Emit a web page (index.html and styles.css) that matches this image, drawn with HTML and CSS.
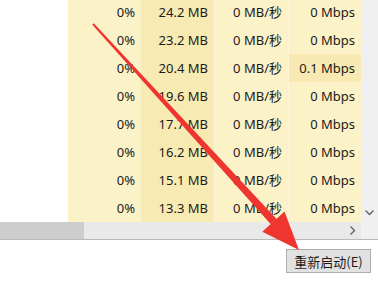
FILE: index.html
```html
<!DOCTYPE html>
<html lang="zh-CN">
  <head>
    <meta charset="UTF-8" />
    <title>任务管理器</title>
    <link rel="stylesheet" href="styles.css">
  </head>
  <body>
    <div class="view">
      <div class="list">
        <div class="rows">
          <div class="row"><div class="name"></div><div class="cell cpu">0%</div><div class="cell mem">24.2 MB</div><div class="cell disk">0 MB/秒</div><div class="cell net">0 Mbps</div></div>
          <div class="row"><div class="name"></div><div class="cell cpu">0%</div><div class="cell mem">23.2 MB</div><div class="cell disk">0 MB/秒</div><div class="cell net">0 Mbps</div></div>
          <div class="row"><div class="name"></div><div class="cell cpu">0%</div><div class="cell mem">20.4 MB</div><div class="cell disk">0 MB/秒</div><div class="cell net hot">0.1 Mbps</div></div>
          <div class="row"><div class="name"></div><div class="cell cpu">0%</div><div class="cell mem">19.6 MB</div><div class="cell disk">0 MB/秒</div><div class="cell net">0 Mbps</div></div>
          <div class="row"><div class="name"></div><div class="cell cpu">0%</div><div class="cell mem">17.7 MB</div><div class="cell disk">0 MB/秒</div><div class="cell net">0 Mbps</div></div>
          <div class="row"><div class="name"></div><div class="cell cpu">0%</div><div class="cell mem">16.2 MB</div><div class="cell disk">0 MB/秒</div><div class="cell net">0 Mbps</div></div>
          <div class="row"><div class="name"></div><div class="cell cpu">0%</div><div class="cell mem">15.1 MB</div><div class="cell disk">0 MB/秒</div><div class="cell net">0 Mbps</div></div>
          <div class="row"><div class="name"></div><div class="cell cpu">0%</div><div class="cell mem">13.3 MB</div><div class="cell disk">0 MB/秒</div><div class="cell net">0 Mbps</div></div>
        </div>
      </div>
      <div class="vscroll">
        <svg class="arrow-btn" width="17" height="17" viewBox="0 0 17 17"><path d="M4.5 6.5 L8.5 10.5 L12.5 6.5" fill="none" stroke="#606060" stroke-width="1.3"/></svg>
      </div>
    </div>

    <div class="hscroll">
      <div class="thumb"></div>
      <div class="track"></div>
      <svg class="arrow-btn" width="17" height="17" viewBox="0 0 17 17"><path d="M6.5 4.5 L10.5 8.5 L6.5 12.5" fill="none" stroke="#606060" stroke-width="1.3"/></svg>
      <div class="corner"></div>
    </div>

    <div class="footer">
      <button class="restart-btn">重新启动(E)</button>
    </div>

    <!-- red annotation arrow drawn over the screenshot -->
    <svg class="annotation" width="378" height="283" viewBox="0 0 378 283">
      <polygon points="92.3,24.7 93.7,23.3 276.6,219 270.8,224.3" fill="#ee3530"/>
      <polygon points="299,250 262.3,231.8 284.5,211.6" fill="#ee3530"/>
    </svg>
  </body>
</html>
```

FILE: styles.css
```css
* {
  margin: 0;
  padding: 0;
  box-sizing: border-box;
}
body {
  width: 378px;
  height: 283px;
  overflow: hidden;
  position: relative;
  background: #fff;
  font-family: "Noto Sans", "Noto Sans CJK SC", sans-serif;
  font-size: 13px;
  color: #1b1b1b;
}
.view {
  display: flex;
  height: 222px;
}
.list {
  flex: 1;
  overflow: hidden;
}
.rows {
  margin-top: -2px;
}
.row {
  display: grid;
  grid-template-columns: 68px 73px 73px 74px 73px;
  height: 28px;
}
.name {
  background: #fff;
}
.cell {
  text-align: right;
  padding-right: 6px;
  line-height: 28px;
  white-space: nowrap;
}
.cpu {
  background: #fcf2c8;
}
.mem {
  background: #f8eab3;
}
.disk {
  background: #fcf2c8;
  border-left: 1px solid #fdf6d6;
}
.net {
  background: #fcf2c8;
  border-left: 1px solid #fdf6d6;
}
.net.hot {
  background: #f7e9b1;
}
.vscroll {
  width: 17px;
  background: #f0f0f0;
  display: flex;
  flex-direction: column;
  justify-content: flex-end;
  padding-bottom: 1px;
}
.arrow-btn {
  display: block;
  flex-shrink: 0;
}
.hscroll {
  display: flex;
  height: 18px;
  background: #e9e9e9;
  border-bottom: 1px solid #b9b9b9;
}
.thumb {
  width: 84px;
  background: #cdcdcd;
}
.track {
  flex: 1;
}
.corner {
  width: 17px;
  background: #f0f0f0;
}
.footer {
  height: 43px;
  display: flex;
  justify-content: flex-end;
  align-items: center;
  padding-right: 7px;
  padding-bottom: 1px;
}
.restart-btn {
  width: 85px;
  height: 24px;
  background: #e1e1e1;
  border: 1px solid #adadad;
  font-family: "Noto Sans CJK SC", sans-serif;
  font-size: 13px;
  color: #1b1b1b;
}
.annotation {
  position: absolute;
  left: 0;
  top: 0;
  pointer-events: none;
}
```
